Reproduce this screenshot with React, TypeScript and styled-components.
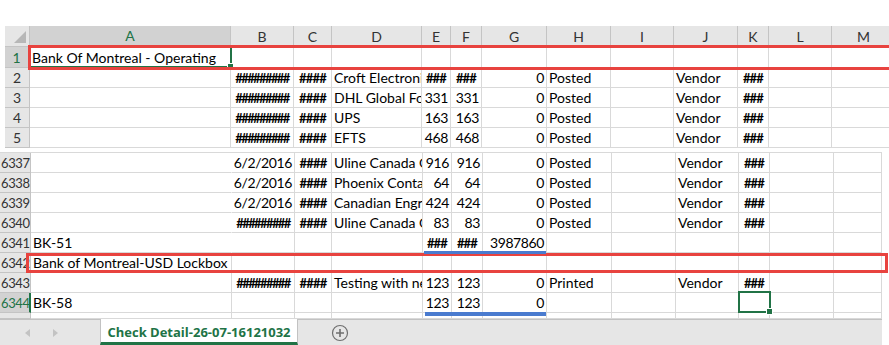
import React from "react";
import styled, { createGlobalStyle } from "styled-components";

const Global = createGlobalStyle`
  html, body { margin: 0; padding: 0; background: #fff; overflow: hidden; }
  body { font-family: Lato, "Noto Sans", sans-serif; }
`;

const GRID = "#d9d9d9";
const HEAD_BG = "#e6e6e6";
const HEAD_LINE = "#c4c4c4";
const GREEN = "#217346";

const Page = styled.div`
  position: relative;
  width: 889px;
  height: 345px;
  overflow: hidden;
`;

const TopSpace = styled.div`
  height: 26px;
`;

const Pane = styled.div<{ $left: number; $width: number; $top?: boolean }>`
  margin-left: ${(p) => p.$left}px;
  width: ${(p) => p.$width}px;
  overflow: hidden;
  border-top: ${(p) => (p.$top ? `1px solid ${GRID}` : "none")};
`;

const Row = styled.div<{ $cols: string; $h: number }>`
  display: grid;
  grid-template-columns: ${(p) => p.$cols};
  height: ${(p) => p.$h}px;
`;

const Corner = styled.div`
  position: relative;
  background: ${HEAD_BG};
  border-right: 1px solid ${HEAD_LINE};
  border-bottom: 1px solid ${HEAD_LINE};
  &::after {
    content: "";
    position: absolute;
    right: 3px;
    bottom: 3px;
    width: 0;
    height: 0;
    border-left: 12px solid transparent;
    border-bottom: 12px solid #b7b7b7;
  }
`;

const ColHead = styled.div<{ $active?: boolean }>`
  display: flex;
  align-items: center;
  justify-content: center;
  background: ${(p) => (p.$active ? "#d2d2d2" : HEAD_BG)};
  color: ${(p) => (p.$active ? GREEN : "#333")};
  border-right: 1px solid ${HEAD_LINE};
  border-bottom: ${(p) => (p.$active ? `2px solid ${GREEN}` : `1px solid ${HEAD_LINE}`)};
  font-size: 14px;
  box-sizing: border-box;
`;

const RowHead = styled.div<{ $active?: boolean; $wide?: boolean }>`
  display: flex;
  align-items: center;
  justify-content: ${(p) => (p.$wide ? "flex-start" : "center")};
  padding-left: ${(p) => (p.$wide ? "1px" : "0")};
  background: ${(p) => (p.$active ? "#d2d2d2" : HEAD_BG)};
  color: ${(p) => (p.$active ? GREEN : "#333")};
  border-right: ${(p) => (p.$active ? `2px solid ${GREEN}` : `1px solid ${HEAD_LINE}`)};
  border-bottom: 1px solid ${HEAD_LINE};
  font-size: ${(p) => (p.$wide ? "13px" : "14px")};
  letter-spacing: ${(p) => (p.$wide ? "-0.4px" : "0")};
  box-sizing: border-box;
  overflow: hidden;
  white-space: nowrap;
`;

const Cell = styled.div<{ $align: "left" | "right" | "center"; $noRight?: boolean }>`
  display: flex;
  align-items: center;
  justify-content: ${(p) =>
    p.$align === "right" ? "flex-end" : p.$align === "center" ? "center" : "flex-start"};
  padding: ${(p) => (p.$align === "right" ? "0 2px 0 0" : "0 2px 0 2px")};
  letter-spacing: ${(p) => (p.$align === "right" ? "-0.4px" : "0")};
  border-right: ${(p) => (p.$noRight ? "1px solid transparent" : `1px solid ${GRID}`)};
  border-bottom: 1px solid ${GRID};
  font-size: 14px;
  color: #000;
  white-space: nowrap;
  overflow: hidden;
  box-sizing: border-box;
  min-width: 0;
`;

const Hash = styled.span<{ $dense?: boolean }>`
  font-size: 13px;
  letter-spacing: ${(p) => (p.$dense ? "-1.6px" : "-0.8px")};
  font-weight: 700;
`;

const Gap = styled.div`
  height: 4px;
`;

const TabBar = styled.div`
  display: flex;
  align-items: stretch;
  width: 882px;
  height: 26px;
  background: ${HEAD_BG};
  border-top: 1px solid #c2c2c2;
  box-sizing: border-box;
`;

const NavArea = styled.div`
  width: 100px;
  display: flex;
  align-items: center;
  padding-left: 25px;
  gap: 23px;
  box-sizing: border-box;
`;

const Tri = styled.span<{ $dir: "left" | "right" }>`
  width: 0;
  height: 0;
  border-top: 4px solid transparent;
  border-bottom: 4px solid transparent;
  ${(p) =>
    p.$dir === "left"
      ? "border-right: 5px solid #c3c3c3;"
      : "border-left: 5px solid #c3c3c3;"}
`;

const Tab = styled.div`
  width: 198px;
  margin-top: -1px;
  background: #fff;
  border-left: 1px solid #c2c2c2;
  border-right: 1px solid #c2c2c2;
  border-bottom: 3px solid ${GREEN};
  box-sizing: border-box;
  display: flex;
  align-items: center;
  justify-content: center;
  color: ${GREEN};
  font-family: "Open Sans", Lato, sans-serif;
  font-weight: 700;
  font-size: 13px;
  padding-top: 2px;
`;

const AddBtn = styled.div`
  display: flex;
  align-items: center;
  margin-left: 33px;
`;

const RedBox = styled.div`
  position: absolute;
  border: 3px solid #e8433f;
  box-sizing: border-box;
`;

const BlueBar = styled.div`
  position: absolute;
  height: 3px;
  background: #4a7bcf;
`;

const Selection = styled.div`
  position: absolute;
  border: 2px solid ${GREEN};
  box-sizing: border-box;
  &::after {
    content: "";
    position: absolute;
    right: -4px;
    bottom: -4px;
    width: 5px;
    height: 5px;
    background: ${GREEN};
    border: 1px solid #fff;
  }
`;

const UPPER_COLS = "25px 201px 63px 38px 90px 29px 31px 65px 64px 63px 64px 31px 63px 64px";
const LOWER_COLS = "31px 201px 63px 37px 91px 29px 31px 64px 65px 64px 63px 31px 64px 48px";
const LETTERS = ["A", "B", "C", "D", "E", "F", "G", "H", "I", "J", "K", "L", "M"];

type RowData = { n: string; cells: string[]; noA?: boolean; active?: boolean; h?: number };

const upperRows: RowData[] = [
  { n: "1", cells: ["Bank Of Montreal - Operating"], active: true, h: 21 },
  { n: "2", cells: ["", "#########", "####", "Croft Electronics", "###", "###", "0", "Posted", "", "Vendor", "###"] },
  { n: "3", cells: ["", "#########", "####", "DHL Global Forwarding", "331", "331", "0", "Posted", "", "Vendor", "###"] },
  { n: "4", cells: ["", "#########", "####", "UPS", "163", "163", "0", "Posted", "", "Vendor", "###"] },
  { n: "5", cells: ["", "#########", "####", "EFTS", "468", "468", "0", "Posted", "", "Vendor", "###"] },
];

const lowerRows: RowData[] = [
  { n: "6337", cells: ["", "6/2/2016", "####", "Uline Canada Corp", "916", "916", "0", "Posted", "", "Vendor", "###"], noA: true },
  { n: "6338", cells: ["", "6/2/2016", "####", "Phoenix Contact", "64", "64", "0", "Posted", "", "Vendor", "###"], noA: true },
  { n: "6339", cells: ["", "6/2/2016", "####", "Canadian Engraving", "424", "424", "0", "Posted", "", "Vendor", "###"], noA: true },
  { n: "6340", cells: ["", "#########", "####", "Uline Canada Corp", "83", "83", "0", "Posted", "", "Vendor", "###"], noA: true },
  { n: "6341", cells: ["BK-51", "", "", "", "###", "###", "3987860"], noA: true },
  { n: "6342", cells: ["Bank of Montreal-USD Lockbox"] },
  { n: "6343", cells: ["", "#########", "####", "Testing with new", "123", "123", "0", "Printed", "", "Vendor", "###"] },
  { n: "6344", cells: ["BK-58", "", "", "", "123", "123", "0"], active: true },
];

const alignOf = (v: string): "left" | "right" | "center" => {
  if (/^#+$/.test(v)) return "center";
  if (/^[\d/]+$/.test(v)) return "right";
  return "left";
};

const CellContent: React.FC<{ v: string }> = ({ v }) =>
  /^#+$/.test(v) ? <Hash $dense={v.length > 5}>{v}</Hash> : <>{v}</>;

const DataRow: React.FC<{ r: RowData; cols: string; wide?: boolean }> = ({ r, cols, wide }) => (
  <Row $cols={cols} $h={r.h ?? 20}>
    <RowHead $active={r.active} $wide={wide}>{r.n}</RowHead>
    {LETTERS.map((_, i) => {
      const v = r.cells[i] ?? "";
      return (
        <Cell key={i} $align={alignOf(v)} $noRight={i === 0 && r.noA}>
          <CellContent v={v} />
        </Cell>
      );
    })}
  </Row>
);

const PlusIcon = () => (
  <svg width="18" height="18" viewBox="0 0 18 18">
    <circle cx="9" cy="9" r="7.5" fill="none" stroke="#6f6f6f" strokeWidth="1.2" />
    <path d="M9 5v8M5 9h8" stroke="#6f6f6f" strokeWidth="1.6" />
  </svg>
);

export default function App() {
  return (
    <Page>
      <Global />
      <TopSpace />
      <Pane $left={5} $width={884}>
        <Row $cols={UPPER_COLS} $h={21}>
          <Corner />
          {LETTERS.map((l) => (
            <ColHead key={l} $active={l === "A"}>{l}</ColHead>
          ))}
        </Row>
        {upperRows.map((r) => (
          <DataRow key={r.n} r={r} cols={UPPER_COLS} />
        ))}
      </Pane>
      <Gap />
      <Pane $left={0} $width={882} $top>
        {lowerRows.map((r) => (
          <DataRow key={r.n} r={r} cols={LOWER_COLS} wide />
        ))}
        <DataRow r={{ n: "", cells: [], h: 6 }} cols={LOWER_COLS} wide />
      </Pane>
      <TabBar>
        <NavArea>
          <Tri $dir="left" />
          <Tri $dir="right" />
        </NavArea>
        <Tab>Check Detail-26-07-16121032</Tab>
        <AddBtn>
          <PlusIcon />
        </AddBtn>
      </TabBar>

      <Selection style={{ left: 29, top: 46, width: 203, height: 22 }} />
      <Selection style={{ left: 738, top: 291, width: 33, height: 22 }} />
      <RedBox style={{ left: 28, top: 45, width: 880, height: 25 }} />
      <RedBox style={{ left: 26, top: 253, width: 862, height: 20 }} />
      <BlueBar style={{ left: 424, top: 251, width: 122 }} />
      <BlueBar style={{ left: 425, top: 312, width: 121, height: 4 }} />
    </Page>
  );
}
